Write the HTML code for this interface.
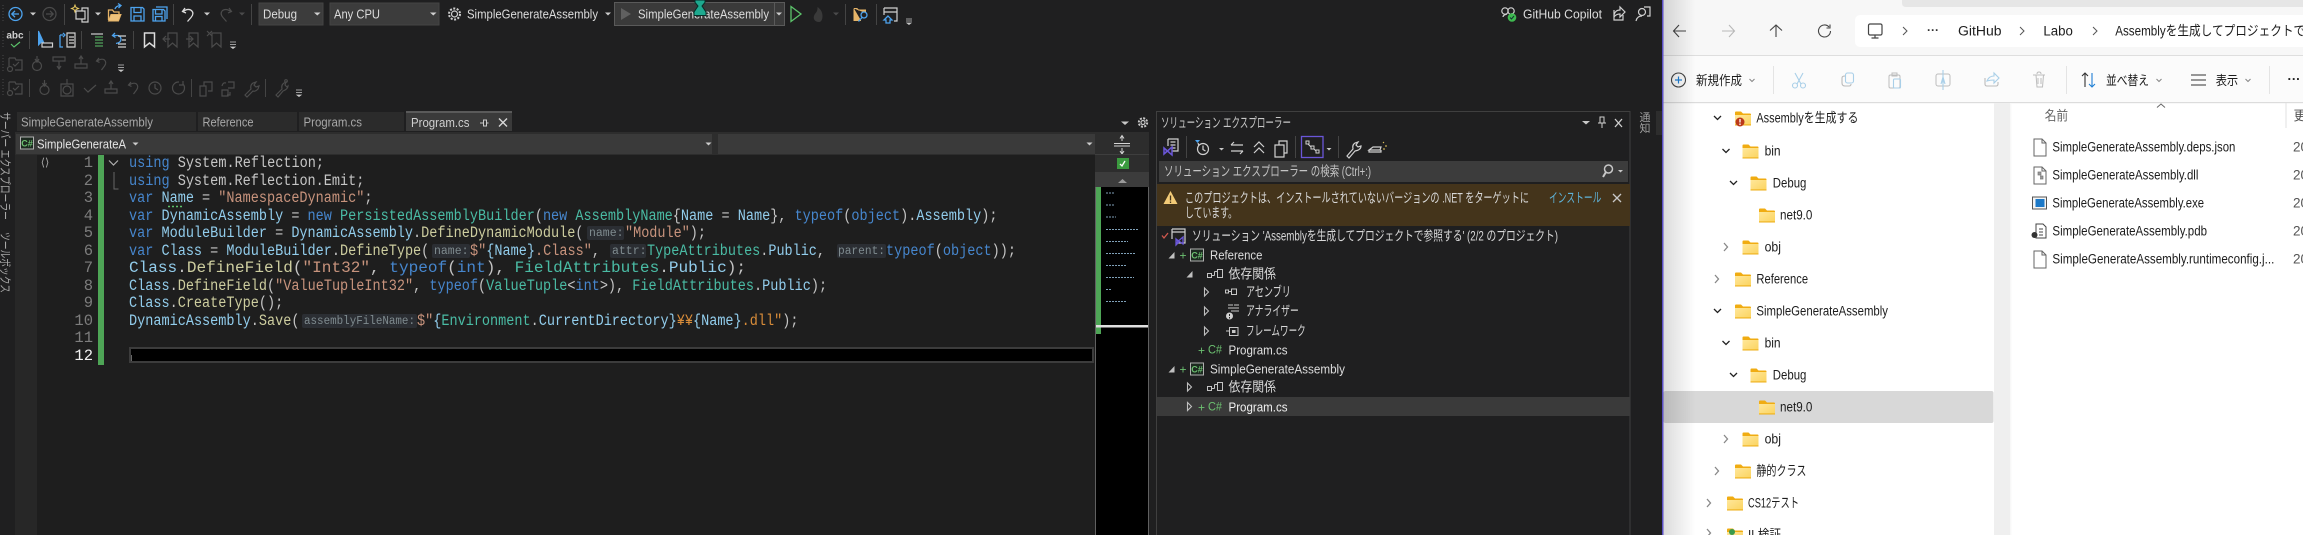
<!DOCTYPE html>
<html lang="ja"><head><meta charset="utf-8"><title>VS</title>
<style>
html,body{margin:0;padding:0;background:#1f1f20;width:2303px;height:535px;overflow:hidden}
svg{position:absolute;left:0;top:0;display:block}
text{white-space:pre;dominant-baseline:central;font-family:"Liberation Sans","Noto Sans CJK JP",sans-serif}
.u{font-size:13px;fill:#dcdcdc}
.d{font-size:13px;fill:#a8a8a8}
.j{font-size:13.5px;fill:#d8d8d8}
.x{font-size:13.5px;fill:#1c1c1c}
.c{font-family:"Liberation Mono","Noto Sans CJK JP",monospace;font-size:15.5px;fill:#d4d4d4;opacity:.92}
.n{font-family:"Liberation Mono",monospace;font-size:15.5px;fill:#7d7d7d;text-anchor:end}
.h{font-family:"Liberation Mono",monospace;font-size:11.5px;fill:#7f8b8f}
.k{fill:#4a8fdc}.t{fill:#4ec9b0}.v{fill:#9cdcfe}.m{fill:#dcdcaa}.s{fill:#d69d85}.y{fill:#e8963c}
.ic{fill:none;stroke:#d0d0d0;stroke-width:1.2}
.dm{fill:none;stroke:#4b4b4b;stroke-width:1.2}
.bl{fill:none;stroke:#4da3ee;stroke-width:1.3}
.sp{stroke:#444;stroke-width:1}
.ex{fill:none;stroke:#555;stroke-width:1.1}
.fa{fill:none;stroke:#a9cfe8;stroke-width:1.1}
</style></head><body>
<svg width="2303" height="535" viewBox="0 0 2303 535" xmlns="http://www.w3.org/2000/svg">
<defs>
<linearGradient id="fg" x1="0" y1="0" x2="1" y2="1"><stop offset="0" stop-color="#ffe79a"/><stop offset="1" stop-color="#fbd35e"/></linearGradient>
<linearGradient id="sh" x1="0" y1="0" x2="1" y2="0"><stop offset="0" stop-color="#000" stop-opacity=".14"/><stop offset="1" stop-color="#000" stop-opacity="0"/></linearGradient>
<symbol id="f" viewBox="0 0 16 15" overflow="visible"><path d="M0 1.5Q0 .5 1 .5H6L8 2.5H15Q16 2.5 16 3.5V5H0Z" fill="#f0ac12"/><path d="M0 4H16V13Q16 14.5 15 14.5H1Q0 14.5 0 13Z" fill="url(#fg)"/><path d="M0 13.4H16V14.5H0Z" fill="#eeaf18"/></symbol>
<symbol id="cs" viewBox="0 0 14 14" overflow="visible"><rect x=".5" y=".5" width="13" height="12" fill="#1d2a20" stroke="#b0b0b0"/><text x="7" y="6.8" text-anchor="middle" style="font-size:9px;fill:#6cc070;font-weight:bold">C#</text></symbol>
<symbol id="dep" viewBox="0 0 16 10" overflow="visible"><path d="M.5 4.5h4v4h-4zM4.5 6.5h3M7.5 2.5h3M7.5 2.5v4M10.5 .5h5v8h-5z" fill="none" stroke="#c4c4c4"/></symbol>
</defs>

<!-- VS background -->
<rect width="1663" height="535" fill="#1f1f20"/>
<!-- drag dots -->
<path d="M3 5v18M3 31v18M3 55v18M3 79v18" stroke="#4a4a4a" stroke-dasharray="1 2"/>

<!-- Row 1 toolbar -->
<circle cx="15.5" cy="14" r="6.5" class="bl"/><path d="M19 14h-7M15 10.8L11.8 14 15 17.2" class="bl"/>
<path d="M30 12.5h6l-3 3z" fill="#ccc"/>
<circle cx="49.5" cy="14" r="6.5" class="dm"/><path d="M46 14h7M50 10.8L53.2 14 50 17.2" class="dm"/>
<path d="M64.500 4v21" class="sp"/>
<path d="M75 5l1 2.500 2.500 1-2.500 1-1 2.500-1-2.500-2.500-1 2.500-1z" fill="none" stroke="#e8c860"/>
<path d="M76 11h6V8h6v14h-6v-3h-6zM82 11h3v8h-3" class="ic"/>
<path d="M95 12.500h6l-3 3z" fill="#ccc"/>
<path d="M108.500 20V10h4l1.500 2h5v3" fill="none" stroke="#e6b468" stroke-width="1.300"/><path d="M108.500 21l2.500-6.500h10l-2.500 6.500z" fill="#eec27c" stroke="#e6b468"/><path d="M115 9q1-3 5-3.500M118 3.500l3 2-2.500 2.500" class="bl"/>
<path d="M131 7.500h11.500l1.500 1.500v12h-13zM134 7.500v5h7v-5M134 21v-5h7v5" class="bl"/>
<path d="M153 9.500h10.500l1.500 1.500v10h-12zM155.500 9.500v4.500h6.500v-4.500M155.500 21v-4.500h6.500V21M156 7h11v12" class="bl"/>
<path d="M173.500 4v21" class="sp"/>
<path d="M185 8l-2.500 3.500 3.500 1.500M183 11.500q5-3.500 8.500-1 3 3-.5 7l-3.500 4" fill="none" stroke="#dcdcdc" stroke-width="1.300"/>
<path d="M204 12.500h6l-3 3z" fill="#ccc"/>
<path d="M229 8l2.500 3.500-3.500 1.500M231 11.500q-5-3.500-8.500-1-3 3 .5 7l3.500 4" class="dm"/>
<path d="M239 12.500h6l-3 3z" fill="#4b4b4b"/>
<path d="M251.500 4v21" class="sp"/>

<rect x="259" y="3" width="64" height="22" fill="#3c3c3c" stroke="#444"/>
<text x="263" y="14" class="u" textLength="34" lengthAdjust="spacingAndGlyphs">Debug</text>
<path d="M314 12.500h6.500l-3.200 3z" fill="#d0d0d0"/>
<rect x="330" y="3" width="109" height="22" fill="#3c3c3c" stroke="#444"/>
<text x="334" y="14" class="u" textLength="46" lengthAdjust="spacingAndGlyphs">Any CPU</text>
<path d="M430 12.500h6.500l-3.200 3z" fill="#d0d0d0"/>
<circle cx="454.500" cy="14" r="3" class="ic"/><circle cx="454.500" cy="14" r="5.500" fill="none" stroke="#cfcfcf" stroke-width="2" stroke-dasharray="2 1.500"/>
<text x="467" y="14" class="u" textLength="131" lengthAdjust="spacingAndGlyphs">SimpleGenerateAssembly</text>
<path d="M605 12.500h6l-3 3z" fill="#ccc"/>
<rect x="614.500" y="2.500" width="170" height="23" fill="#3a3a3a" stroke="#5a5a5a"/>
<path d="M621 8l10 6-10 6z" fill="#606060"/>
<path d="M774.500 2.500v23" stroke="#5a5a5a"/>
<text x="638" y="14" class="u" textLength="131" lengthAdjust="spacingAndGlyphs">SimpleGenerateAssembly</text>
<path d="M776 12.500h6l-3 3z" fill="#ccc"/>
<path d="M695 0h10v2.500l-3 3.500 4 6v3.500h-12V12l4-6-3-3.500z" fill="#1ea98f" stroke="#062e28"/>
<path d="M791 6.500l10 7.500-10 7.500z" fill="none" stroke="#5cc26a" stroke-width="1.300"/>
<path d="M819 22c-4 0-6-3-5-6 .5-2 2-3 3-5 .5-1.500 .5-3 .5-4 3 2 5 5 5 9 0 3-1 6-3.500 6z" fill="#3a3a3a"/>
<path d="M833 12.500h6l-3 3z" fill="#4b4b4b"/>
<path d="M845.500 4v21" class="sp"/>
<path d="M854 8.500h3l1.500 1.500h7v3M854 8.500v12h7" fill="#e6b468" stroke="#e6b468"/><circle cx="864" cy="15" r="3" fill="#1f1f20" stroke="#4da3ee" stroke-width="1.300"/><path d="M862 17.500l-3.500 4" class="bl"/>
<path d="M876.500 4v21" class="sp"/>
<path d="M884 8h13v13h-3M884 8v7M884 12h13M884 8h13" class="ic"/><path d="M888 16l-4 4h2v3h4v-3h2z" class="bl"/>
<path d="M906 19h6M906 21h6M907 23h4l-2 1.500z" stroke="#c8c8c8" fill="#c8c8c8" stroke-width=".8"/>

<circle cx="1505" cy="11" r="3.200" class="ic"/><circle cx="1511" cy="11" r="3.200" class="ic"/><path d="M1503 17q0-2 4-3M1512 13v2" class="ic"/><circle cx="1512" cy="17.500" r="4.300" fill="#3fb950"/><path d="M1510 17.500l1.500 1.500 2.500-3" stroke="#133" fill="none"/>
<text x="1523" y="14" class="u" textLength="79" lengthAdjust="spacingAndGlyphs">GitHub Copilot</text>
<path d="M1614 10v10h9v-5M1614 15q1-5 6-5V7l5 5-5 5v-3q-4 0-6 3" class="ic"/>
<circle cx="1642" cy="12" r="3.500" class="ic"/><path d="M1636 21q1-5 6-5M1644 7h6v9h-3" class="ic"/>

<!-- Row 2 -->
<text x="15" y="36" text-anchor="middle" style="font-size:10px;fill:#d0d0d0;font-weight:bold">abc</text>
<path d="M11 44l3 3 6-5" fill="none" stroke="#5cc26a" stroke-width="1.200"/>
<path d="M29.500 31v18" class="sp"/>
<path d="M38.500 31v14l3-3 2 0z" fill="#4da3ee" stroke="#4da3ee"/><rect x="42" y="43" width="10.500" height="4" fill="none" stroke="#d0d0d0" stroke-width="1.200"/>
<path d="M60 35h3M60 35v12h3M63 33l2 2-2 2" class="bl"/><path d="M67 33h8v14h-8zM69 37h5M69 40h5M69 43h5" class="ic"/>
<path d="M81.500 31v18" class="sp"/>
<path d="M91 34h12M95 37h8M95 40h8M95 43h8M95 46h8" fill="none" stroke="#5cc26a" stroke-width="1.100"/><path d="M91 34h12" class="ic"/>
<path d="M115 33l-2.500 2.500 3 2M113 35.500h5q3 1 3 4t-5 4" class="bl"/><path d="M118 36h8M122 40h4M118 44h8M118 47h8" class="ic"/>
<path d="M133.500 31v18" class="sp"/>
<path d="M144.500 33h10v14l-5-4-5 4z" fill="none" stroke="#dcdcdc" stroke-width="1.500"/>
<path d="M168 33h9v14l-4.500-4-4.500 4zM170 39h-7M166 36l-3 3 3 3" class="dm"/>
<path d="M189 33h9v14l-4.500-4-4.500 4zM186 39h7M190 36l3 3-3 3" class="dm"/>
<path d="M212 33h9v14l-4.500-4-4.500 4zM207 31l5 5M212 31l-5 5" class="dm"/>
<path d="M230 42h6M230 44.500h6M231 47h4l-2 1.500z" stroke="#c8c8c8" fill="#c8c8c8" stroke-width=".8"/>

<!-- Row 3 -->
<path d="M9 58h6l1 2h6v10h-7M9 58v8M13 64l2 2 4-4" class="dm"/><circle cx="10" cy="69" r="2.500" class="dm"/>
<circle cx="37" cy="66" r="4.500" class="dm"/><path d="M37 56v6M35 59l2 3 2-3" class="dm"/>
<path d="M53 57h12v4H53zM59 61v8M57 66l2 3 2-3" class="dm"/>
<path d="M75 64h12v4H75zM81 64v-8M79 59l2-3 2 3" class="dm"/>
<path d="M99 58l-2.500 3 3 1.500M97 61q5-3 7.500-1 2.500 2.500 0 6l-3 4" class="dm"/>
<path d="M118 65h6M118 67.500h6M119 70h4l-2 1.500z" stroke="#c8c8c8" fill="#c8c8c8" stroke-width=".8"/>

<!-- Row 4 -->
<path d="M9 82h6l1 2h6v10h-7M9 82v8M13 88l2 2 4-4" class="dm"/><circle cx="10" cy="93" r="2.500" class="dm"/>
<path d="M29.500 79v18" class="sp"/>
<circle cx="44.500" cy="90" r="4.500" class="dm"/><path d="M44.500 80v6M42.500 83l2 3 2-3" class="dm"/>
<path d="M61 84h12v12H61z" class="dm"/><circle cx="67" cy="90" r="4" class="dm"/><path d="M67 79v5" class="dm"/>
<path d="M84 88l4 4 8-7" class="dm"/>
<path d="M105 89h12v4h-12zM111 89v-8M109 84l2-3 2 3" class="dm"/>
<path d="M131 82l-2.500 3 3 1.500M129 85q5-3 7.500-1 2.500 2.500 0 6l-3 4" class="dm"/>
<circle cx="155" cy="88" r="6" class="dm"/><path d="M155 84v4l3 2" class="dm"/>
<path d="M183 84a6 6 0 1 1-4-2M183 81v4h-4" class="dm"/>
<path d="M191.500 79v18" class="sp"/>
<path d="M200 86h6v10h-6zM204 86v-4h8v9h-4" class="dm"/>
<path d="M222 90h6v6h-6zM228 82h6v6h-6M222 86q1-4 4-3M230 92v3h-3" class="dm"/>
<path d="M245 95l6-6q-1-4 2-6l3-1-2 3 2 2 3-1-1 3q-3 3-5 2l-6 6z" class="dm"/>
<path d="M265.500 79v18" class="sp"/>
<path d="M276 95l6-6q-1-4 2-6l2-1-1 3 2 2 1-1q0 3-5 5l-5 6z" class="dm"/><circle cx="286" cy="81" r="1.300" class="dm"/>
<path d="M296 90h6M296 92.500h6M297 95h4l-2 1.500z" stroke="#c8c8c8" fill="#c8c8c8" stroke-width=".8"/>

<!-- left rotated strip -->
<text transform="translate(5,112) rotate(90)" class="d" style="font-size:12px" textLength="108" lengthAdjust="spacingAndGlyphs">サーバー エクスプローラー</text>
<text transform="translate(5,232) rotate(90)" class="d" style="font-size:12px" textLength="61" lengthAdjust="spacingAndGlyphs">ツールボックス</text>

<!-- Document tabs -->
<rect x="17" y="112" width="179" height="19" fill="#2b2b2b"/>
<rect x="198" y="112" width="99" height="19" fill="#2b2b2b"/>
<rect x="299" y="112" width="105" height="19" fill="#2b2b2b"/>
<rect x="406" y="112" width="106" height="19" fill="#3a3a3a"/><rect x="406" y="111" width="106" height="2" fill="#5a5a5a"/>
<text x="21" y="122" class="d" textLength="132" lengthAdjust="spacingAndGlyphs">SimpleGenerateAssembly</text>
<text x="202.500" y="122" class="d" textLength="51" lengthAdjust="spacingAndGlyphs">Reference</text>
<text x="303.500" y="122" class="d" textLength="58.500" lengthAdjust="spacingAndGlyphs">Program.cs</text>
<text x="411" y="122.500" class="u" style="fill:#d0d0d0" textLength="58.500" lengthAdjust="spacingAndGlyphs">Program.cs</text>
<path d="M480 123h3M483.500 120v6h3v-6zM486.500 123h2" stroke="#ccc" fill="none"/>
<path d="M499 118.500l8 8M507 118.500l-8 8" stroke="#d8d8d8" stroke-width="1.400"/>
<path d="M1121 121.500h8l-4 3.500z" fill="#c8c8c8"/>
<circle cx="1143" cy="122.500" r="2" fill="none" stroke="#c8c8c8" stroke-width="1.200"/><circle cx="1143" cy="122.500" r="4.200" fill="none" stroke="#c8c8c8" stroke-width="2" stroke-dasharray="2 1.300"/>

<!-- Editor -->
<rect x="15" y="132" width="1134" height="403" fill="#1e1e1e"/>
<rect x="15" y="132" width="1134" height="23" fill="#2d2d2d"/>
<rect x="16" y="134" width="696" height="20" fill="#3a3a3a"/>
<rect x="718" y="134" width="377" height="20" fill="#3a3a3a"/>
<use href="#cs" x="20" y="136.500" width="14" height="14"/>
<text x="37" y="144" class="u" style="fill:#e4e4e4" textLength="89" lengthAdjust="spacingAndGlyphs">SimpleGenerateA</text>
<path d="M132.500 142.500h6l-3 3z" fill="#ccc"/>
<path d="M705.500 142.500h6l-3 3z" fill="#ccc"/>
<path d="M1086.500 142.500h6l-3 3z" fill="#ccc"/>
<rect x="15" y="155" width="22" height="380" fill="#272727"/>
<text x="45" y="163" class="d" text-anchor="middle" style="font-size:11px">⟨⟩</text>
<rect x="98" y="155" width="6" height="210" fill="#4ea556"/>
<path d="M109 160.500l4.500 4.500 4.500-4.500" fill="none" stroke="#b0b0b0" stroke-width="1.200"/>
<path d="M114 172v17h4.500" fill="none" stroke="#666"/>

<text class="n" x="93" y="163">1</text>
<text class="n" x="93" y="181">2</text>
<text class="n" x="93" y="198">3</text>
<text class="n" x="93" y="216">4</text>
<text class="n" x="93" y="233">5</text>
<text class="n" x="93" y="251">6</text>
<text class="n" x="93" y="268">7</text>
<text class="n" x="93" y="286">8</text>
<text class="n" x="93" y="303">9</text>
<text class="n" x="93" y="321">10</text>
<text class="n" x="93" y="338">11</text>
<text class="n" x="93" y="356" style="fill:#f0f0f0">12</text>

<text class="c" x="129" y="163" textLength="195" lengthAdjust="spacingAndGlyphs"><tspan class="k">using</tspan> System.Reflection;</text>
<text class="c" x="129" y="181" textLength="235.400" lengthAdjust="spacingAndGlyphs"><tspan class="k">using</tspan> System.Reflection.Emit;</text>
<text class="c" x="129" y="198" textLength="243.500" lengthAdjust="spacingAndGlyphs"><tspan class="k">var</tspan> <tspan class="v">Name</tspan> = <tspan class="s">"NamespaceDynamic"</tspan>;</text>
<path d="M168 206.500h16" stroke="#5cc26a" stroke-width="1.500" stroke-dasharray="2 2"/>
<text class="c" x="129" y="216" textLength="868.500" lengthAdjust="spacingAndGlyphs"><tspan class="k">var</tspan> <tspan class="v">DynamicAssembly</tspan> = <tspan class="k">new</tspan> <tspan class="t">PersistedAssemblyBuilder</tspan>(<tspan class="k">new</tspan> <tspan class="t">AssemblyName</tspan>{<tspan class="v">Name</tspan> = <tspan class="v">Name</tspan>}, <tspan class="k">typeof</tspan>(<tspan class="k">object</tspan>).<tspan class="v">Assembly</tspan>);</text>
<text class="c" x="129" y="233" textLength="454.500" lengthAdjust="spacingAndGlyphs"><tspan class="k">var</tspan> <tspan class="v">ModuleBuilder</tspan> = <tspan class="v">DynamicAssembly</tspan>.<tspan class="m">DefineDynamicModule</tspan>(</text>
<rect x="587" y="226" width="37" height="14" rx="2" fill="#2b2e33"/>
<text class="h" x="589" y="233.500">name:</text>
<text class="c" x="625" y="233" textLength="81" lengthAdjust="spacingAndGlyphs"><tspan class="s">"Module"</tspan>);</text>
<text class="c" x="129" y="251" textLength="300.300" lengthAdjust="spacingAndGlyphs"><tspan class="k">var</tspan> <tspan class="v">Class</tspan> = <tspan class="v">ModuleBuilder</tspan>.<tspan class="m">DefineType</tspan>(</text>
<rect x="432" y="244" width="38" height="14" rx="2" fill="#2b2e33"/>
<text class="h" x="434" y="251.500">name:</text>
<text class="c" x="470" y="251" textLength="130" lengthAdjust="spacingAndGlyphs"><tspan class="s">$"</tspan><tspan class="v">{Name}</tspan><tspan class="s">.Class"</tspan>,</text>
<rect x="610" y="244" width="36" height="14" rx="2" fill="#2b2e33"/>
<text class="h" x="612" y="251.500">attr:</text>
<text class="c" x="647" y="251" textLength="178" lengthAdjust="spacingAndGlyphs"><tspan class="t">TypeAttributes</tspan>.<tspan class="v">Public</tspan>,</text>
<rect x="837" y="244" width="49" height="14" rx="2" fill="#2b2e33"/>
<text class="h" x="838" y="251.500" textLength="47" lengthAdjust="spacingAndGlyphs">parent:</text>
<text class="c" x="886" y="251" textLength="130" lengthAdjust="spacingAndGlyphs"><tspan class="k">typeof</tspan>(<tspan class="k">object</tspan>));</text>
<text class="c" x="129" y="268" textLength="617" lengthAdjust="spacingAndGlyphs"><tspan class="v">Class</tspan>.<tspan class="m">DefineField</tspan>(<tspan class="s">"Int32"</tspan>, <tspan class="k">typeof</tspan>(<tspan class="k">int</tspan>), <tspan class="t">FieldAttributes</tspan>.<tspan class="v">Public</tspan>);</text>
<text class="c" x="129" y="286" textLength="698.100" lengthAdjust="spacingAndGlyphs"><tspan class="v">Class</tspan>.<tspan class="m">DefineField</tspan>(<tspan class="s">"ValueTupleInt32"</tspan>, <tspan class="k">typeof</tspan>(<tspan class="t">ValueTuple</tspan>&lt;<tspan class="k">int</tspan>&gt;), <tspan class="t">FieldAttributes</tspan>.<tspan class="v">Public</tspan>);</text>
<text class="c" x="129" y="303" textLength="154.200" lengthAdjust="spacingAndGlyphs"><tspan class="v">Class</tspan>.<tspan class="m">CreateType</tspan>();</text>
<text class="c" x="129" y="321" textLength="170.500" lengthAdjust="spacingAndGlyphs"><tspan class="v">DynamicAssembly</tspan>.<tspan class="m">Save</tspan>(</text>
<rect x="302" y="314" width="115" height="14" rx="2" fill="#2b2e33"/>
<text class="h" x="304" y="321.500" textLength="111" lengthAdjust="spacingAndGlyphs">assemblyFileName:</text>
<text class="c" x="417" y="321" textLength="381.500" lengthAdjust="spacingAndGlyphs"><tspan class="s">$"</tspan><tspan class="v">{</tspan><tspan class="t">Environment</tspan>.<tspan class="v">CurrentDirectory}</tspan><tspan class="y">¥¥</tspan><tspan class="v">{Name}</tspan><tspan class="y">.dll"</tspan>);</text>
<rect x="130" y="348" width="963" height="14" fill="#000" stroke="#3c3c3c" stroke-width="2"/>
<rect x="131" y="355" width="1" height="6" fill="#666"/>

<!-- right scroll/minimap -->
<rect x="1095" y="132" width="54" height="403" fill="#2d2d2d"/>
<path d="M1114 143.500h16M1114 146h16M1122 136v5M1120 138.500l2-3 2 3M1122 148v5M1120 151l2 3 2-3" stroke="#d4d4d4" fill="none"/>
<path d="M1095 154.500h54" stroke="#3e3e3e"/>
<rect x="1117" y="158" width="12" height="11" fill="#3b9a3f"/><path d="M1120 164l2 2 3-5" stroke="#fff" fill="none" stroke-width="1.300"/>
<rect x="1095" y="172" width="54" height="15" fill="#3c3c3c"/><path d="M1118 183l4.500-4 4.500 4z" fill="#9a9a9a"/>
<rect x="1095" y="187" width="54" height="348" fill="#000"/>
<rect x="1095" y="187" width="6" height="147" fill="#4ea556"/>
<rect x="1095" y="325" width="53" height="2.500" fill="#e0e0e0"/>
<path d="M1095.500 187V535M1148.500 187V535" stroke="#606060" fill="none"/>
<g stroke="#7fa0b8" stroke-width="1" stroke-dasharray="2 1"><path d="M1106 193h8M1106 205h8M1106 217h10M1106 229.500h33M1106 241.500h22M1106 253.500h30M1106 265.500h21M1106 277.500h28M1106 289.500h6M1106 301.500h21"/></g>

<!-- Solution Explorer -->
<rect x="1156.500" y="111.500" width="473.500" height="424" fill="#1f1f20" stroke="#3f3f3f"/>
<text x="1161" y="123" class="j" style="fill:#c8c8c8" textLength="130" lengthAdjust="spacingAndGlyphs">ソリューション エクスプローラー</text>
<path d="M1582 121h8l-4 3.500z" fill="#c8c8c8"/>
<path d="M1600 117h4v6h-4zM1598 123h8M1602 123v5" stroke="#d0d0d0" fill="none"/>
<path d="M1615 119l7 8M1622 119l-7 8" stroke="#d0d0d0" stroke-width="1.300"/>

<path d="M1168 139h10v12h-6M1168 139v7M1170.500 142h5M1170.500 145h5M1170.500 148h5" class="ic"/><path d="M1164 148l3 3-3 3zM1164 148l8 7v-8l-8 7" fill="none" stroke="#6a56d8" stroke-width="1.500"/>
<path d="M1186.500 136v22M1295.500 136v22M1338.500 136v22" class="sp"/>
<path d="M1195 140h5l-2.500 3z" fill="#4da3ee"/><circle cx="1203" cy="149" r="5.500" class="ic"/><path d="M1203 145.500v4l2.500 1.500M1198 143l1 3" class="ic"/>
<path d="M1219 148h5l-2.500 2.500z" fill="#c8c8c8"/>
<path d="M1231 145h12M1234 142l-3 3M1231 151h12M1240 154l3-3" class="ic"/>
<path d="M1254 147l5-5 5 5M1254 153l5-5 5 5" class="ic"/>
<path d="M1275 145h9v12h-9zM1279 145v-4h8v12h-3" class="ic"/>
<rect x="1301.500" y="136.500" width="21.500" height="21" fill="none" stroke="#6a56d8" stroke-width="1.300"/>
<path d="M1306 141h3v3h-3zM1311 146h3v3h-3zM1316 150h3v3h-3zM1308 144l3 3M1314 149l2 2" stroke="#d0d0d0" fill="none"/>
<path d="M1326.500 148h5l-2.500 2.500z" fill="#c8c8c8"/>
<path d="M1347 156l6-7q-1-4 2-6l3-1-2 3 2 2 3-1q0 4-6 5l-6 7z" class="ic"/>
<path d="M1369 150h11l1-3h-8zM1369 150v2h12v-2" class="ic"/><path d="M1383 143l1-1M1385 146h2M1383 149h2" stroke="#e8c860"/>

<rect x="1159" y="161" width="469" height="21" fill="#3c3c3c"/>
<text x="1164" y="171.500" class="j" style="fill:#c4c4c4" textLength="207" lengthAdjust="spacingAndGlyphs">ソリューション エクスプローラー の検索 (Ctrl+:)</text>
<circle cx="1608.500" cy="169" r="4" fill="none" stroke="#c8c8c8" stroke-width="1.500"/><path d="M1606 172l-3 5" stroke="#c8c8c8" stroke-width="2"/>
<path d="M1618 170h5l-2.500 2.500z" fill="#c8c8c8"/>

<rect x="1157" y="184" width="473" height="42" fill="#44341b"/>
<path d="M1170.500 191l7 13h-14z" fill="#f3cb77"/><path d="M1170.500 195.500v5M1170.500 201.500v1.500" stroke="#44341b" stroke-width="1.300"/>
<text x="1185" y="198" class="j" textLength="344" lengthAdjust="spacingAndGlyphs">このプロジェクトは、インストールされていないバージョンの .NET をターゲットに</text>
<text x="1185" y="213" class="j" textLength="52" lengthAdjust="spacingAndGlyphs">しています。</text>
<text x="1549" y="198" class="j" style="fill:#5fb3d9" textLength="52.400" lengthAdjust="spacingAndGlyphs">インストール</text>
<path d="M1613 194l8 8M1621 194l-8 8" stroke="#c8c8c8" stroke-width="1.300"/>

<path d="M1162 235.500l2 2.500 4-5" stroke="#d0584e" fill="none" stroke-width="1.300"/>
<path d="M1172 229h13v14h-9M1172 229v10M1172 232h13" class="ic"/><path d="M1176 239l3 3-3 3zM1176 239l7 5v-7l-7 6" fill="none" stroke="#6a56d8" stroke-width="1.300"/>
<text x="1192" y="236" class="j" textLength="366" lengthAdjust="spacingAndGlyphs">ソリューション 'Assemblyを生成してプロジェクトで参照する' (2/2 のプロジェクト)</text>

<path d="M1174.500 252v6.500h-6z" fill="#c0c0c0"/>
<text x="1183" y="255.500" text-anchor="middle" style="font-size:12px;fill:#6cc070">+</text>
<use href="#cs" x="1190" y="248.500" width="14" height="14"/>
<text x="1210" y="255" class="u" textLength="52.400" lengthAdjust="spacingAndGlyphs">Reference</text>

<path d="M1192.500 271v6.500h-6z" fill="#c0c0c0"/>
<use href="#dep" x="1207" y="269" width="16" height="10"/>
<text x="1228.500" y="274" class="j" textLength="47.500" lengthAdjust="spacingAndGlyphs">依存関係</text>

<path d="M1204.500 288l4 4-4 4z" fill="none" stroke="#c0c0c0" stroke-width="1.100"/>
<path d="M1225.500 290h3v3h-3zM1228.500 291.500h3M1231.500 289h5v5.500h-5z" stroke="#c8c8c8" fill="none"/>
<text x="1246" y="292" class="j" textLength="44.800" lengthAdjust="spacingAndGlyphs">アセンブリ</text>

<path d="M1204.500 307l4 4-4 4z" fill="none" stroke="#c0c0c0" stroke-width="1.100"/>
<path d="M1228 305h5M1234 305h5M1228 308h11M1231 311h8" stroke="#c8c8c8" fill="none"/><circle cx="1229.500" cy="316" r="3.500" fill="#d0d0d0"/><path d="M1229.500 314v2M1229.500 317v1.500" stroke="#222"/>
<text x="1246" y="311" class="j" textLength="52.800" lengthAdjust="spacingAndGlyphs">アナライザー</text>

<path d="M1204.500 327l4 4-4 4z" fill="none" stroke="#c0c0c0" stroke-width="1.100"/>
<path d="M1226 331h3M1229.500 327.500h8.500v8h-8.500z" stroke="#c8c8c8" fill="none"/><rect x="1232" y="330" width="3.500" height="3" fill="#c8c8c8"/>
<text x="1246" y="331" class="j" textLength="59.700" lengthAdjust="spacingAndGlyphs">フレームワーク</text>

<text x="1201.500" y="350.500" text-anchor="middle" style="font-size:12px;fill:#6cc070">+</text>
<text x="1208" y="349.500" style="font-size:12px;fill:#6cc070" textLength="14" lengthAdjust="spacingAndGlyphs">C#</text>
<text x="1228.500" y="350" class="u" style="fill:#e0e0e0" textLength="59" lengthAdjust="spacingAndGlyphs">Program.cs</text>

<path d="M1174.500 366v6.500h-6z" fill="#c0c0c0"/>
<text x="1183" y="369.500" text-anchor="middle" style="font-size:12px;fill:#6cc070">+</text>
<use href="#cs" x="1190" y="362.500" width="14" height="14"/>
<text x="1210" y="369" class="u" textLength="135" lengthAdjust="spacingAndGlyphs">SimpleGenerateAssembly</text>

<path d="M1187.500 383l4 4-4 4z" fill="none" stroke="#c0c0c0" stroke-width="1.100"/>
<use href="#dep" x="1207" y="382" width="16" height="10"/>
<text x="1228.500" y="387" class="j" textLength="47.500" lengthAdjust="spacingAndGlyphs">依存関係</text>

<rect x="1157" y="397" width="473" height="19" fill="#3a3a3a"/>
<path d="M1187.500 402.500l4 4-4 4z" fill="none" stroke="#c0c0c0" stroke-width="1.100"/>
<text x="1201.500" y="407.500" text-anchor="middle" style="font-size:12px;fill:#6cc070">+</text>
<text x="1208" y="406.500" style="font-size:12px;fill:#6cc070" textLength="14" lengthAdjust="spacingAndGlyphs">C#</text>
<text x="1228.500" y="407" class="u" style="fill:#f0f0f0" textLength="59" lengthAdjust="spacingAndGlyphs">Program.cs</text>

<!-- notify strip -->
<text x="1645" y="118" text-anchor="middle" style="font-size:11px;fill:#a0a0a0">通</text>
<text x="1645" y="129" text-anchor="middle" style="font-size:11px;fill:#a0a0a0">知</text>
<rect x="1656" y="111" width="6" height="24" fill="#2d2d2d"/>
<rect x="1662" y="0" width="1.500" height="535" fill="#5b4fc4"/>

<!-- File Explorer -->
<rect x="1663.500" y="0" width="640" height="535" fill="#fff"/>
<rect x="1663.500" y="0" width="640" height="55" fill="#f7f7f7"/>
<path d="M1902 0h401v7h-397q-4 0-4-4z" fill="#e6e6e6"/>
<rect x="1663.500" y="55" width="640" height="1" fill="#dedede"/>
<rect x="1855" y="15" width="460" height="32" rx="5" fill="#fff"/>
<rect x="1663.500" y="56" width="640" height="46" fill="#fbfbfb"/>
<rect x="1663.500" y="102" width="640" height="1.200" fill="#dcdcdc"/>

<path d="M1686 31h-12M1679 25l-5.500 6 5.500 6" fill="none" stroke="#444" stroke-width="1.100"/>
<path d="M1722 31h12M1729 25l5.500 6-5.500 6" fill="none" stroke="#b8b8b8" stroke-width="1.100"/>
<path d="M1776 37V25M1770 30.500l6-5.500 6 5.500" fill="none" stroke="#444" stroke-width="1.100"/>
<path d="M1829 27a6 6 0 1 0 1.500 4M1830 24.500v3.500h-3.500" fill="none" stroke="#444" stroke-width="1.100"/>
<rect x="1868.500" y="24" width="13.500" height="11" rx="1.500" fill="none" stroke="#444" stroke-width="1.200"/><path d="M1875 35v2.500M1871.500 38h7" stroke="#444" stroke-width="1.200"/>
<path d="M1903 27l4 4-4 4M2020 27l4 4-4 4M2093 27l4 4-4 4" fill="none" stroke="#555"/>
<text x="1933" y="30" text-anchor="middle" style="font-size:12px;fill:#333;font-weight:bold">···</text>
<text x="1958" y="31" class="x" textLength="43.500" lengthAdjust="spacingAndGlyphs">GitHub</text>
<text x="2043.400" y="31" class="x" textLength="29.500" lengthAdjust="spacingAndGlyphs">Labo</text>
<text x="2115.200" y="31" class="x" textLength="190" lengthAdjust="spacingAndGlyphs">Assemblyを生成してプロジェクトで</text>

<circle cx="1678.500" cy="80" r="7" fill="none" stroke="#444" stroke-width="1.100"/><path d="M1678.500 76.500v7M1675 80h7" stroke="#1f7fd4" stroke-width="1.200"/>
<text x="1696" y="80.500" class="x" style="font-size:13px" textLength="46" lengthAdjust="spacingAndGlyphs">新規作成</text>
<path d="M1749.500 79l2.500 2.500 2.500-2.500" class="ex" style="stroke:#888"/>
<path d="M1773.500 66v28M2066.500 66v28M2269.500 66v28" stroke="#e4e4e4"/>
<path d="M1795 73l6 11M1803 73l-6 11" class="fa"/><circle cx="1795" cy="85.500" r="2.500" class="fa"/><circle cx="1803" cy="85.500" r="2.500" class="fa"/>
<rect x="1845.500" y="73" width="8" height="10" rx="2" fill="none" stroke="#a9cfe8" stroke-width="1.100"/><path d="M1845 76q-3 0-3 2v5q0 3 3 3h4q2 0 2-2" class="ex" style="stroke:#bbb"/>
<rect x="1889" y="75" width="11" height="13" rx="1.500" fill="none" stroke="#bdbdbd"/><rect x="1892" y="73" width="5" height="3" fill="none" stroke="#bdbdbd"/><rect x="1893.500" y="79" width="7" height="9" rx="1" fill="none" stroke="#a9cfe8" stroke-width="1.100"/>
<rect x="1936" y="74" width="14" height="12" rx="2" fill="none" stroke="#bdbdbd"/><path d="M1941 84l2-7 2 7M1942 82h2M1943 70v20" class="fa"/>
<path d="M1985 78v6q0 2 2 2h9q2 0 2-2v-2" class="ex" style="stroke:#bbb"/><path d="M1987 81q2-5 7-5v-3l5 5-5 5v-3q-4 0-7 1z" class="fa"/>
<path d="M2033 75h12M2036 75l1 12h4.500l1 0 1-12M2037 74q0-2 2-2t2 2M2038 78v6M2041 78v6" fill="none" stroke="#bdbdbd"/>
<path d="M2085 87V73M2082 76l3-3 3 3" fill="none" stroke="#333" stroke-width="1.100"/><path d="M2092 73v14M2089 84l3 3 3-3" fill="none" stroke="#1f7fd4" stroke-width="1.100"/>
<text x="2106" y="80.500" class="x" style="font-size:13px" textLength="43" lengthAdjust="spacingAndGlyphs">並べ替え</text>
<path d="M2156.500 79l2.500 2.500 2.500-2.500" class="ex" style="stroke:#888"/>
<path d="M2191 75h15M2191 80h15M2191 85h15" stroke="#333" stroke-width="1.100"/>
<text x="2215.700" y="80.500" class="x" style="font-size:13px" textLength="22.500" lengthAdjust="spacingAndGlyphs">表示</text>
<path d="M2245.500 79l2.500 2.500 2.500-2.500" class="ex" style="stroke:#888"/>
<text x="2294" y="79" text-anchor="middle" style="font-size:13px;fill:#222;font-weight:bold">···</text>

<!-- explorer panes -->
<rect x="1994" y="103" width="16" height="432" fill="#efefef"/>
<rect x="2010" y="103" width="1.500" height="432" fill="#f8f8f8"/>
<rect x="1663.500" y="391" width="330" height="32" rx="2" fill="#d8d8d8"/>
<path d="M2157 107.500l4-3.500 4 3.500" fill="none" stroke="#666"/>
<rect x="2285.500" y="103" width="1" height="25" fill="#e2e2e2"/>
<text x="2044.700" y="116" class="x" style="fill:#666" textLength="23.400" lengthAdjust="spacingAndGlyphs">名前</text>
<text x="2293.500" y="116" class="x" style="fill:#555">更</text>

<g fill="none" stroke="#222" stroke-width="1.300">
<path d="M1714 116l3.500 3.500 3.500-3.500M1722.500 149l3.500 3.500 3.500-3.500M1730 181l3.500 3.500 3.500-3.500M1714 309l3.500 3.500 3.500-3.500M1722.500 341l3.500 3.500 3.500-3.500M1730 373l3.500 3.500 3.500-3.500"/>
</g>
<g fill="none" stroke="#888" stroke-width="1.300">
<path d="M1724 243l3.500 4-3.500 4M1715 275l3.500 4-3.500 4M1724 435l3.500 4-3.500 4M1715 467l3.500 4-3.500 4M1707 499l3.500 4-3.500 4M1707 529l3.500 4-3.500 4"/>
</g>
<use href="#f" x="1735" y="111" width="16" height="15"/>
<circle cx="1740" cy="122" r="4.500" fill="#bb3a1a"/><path d="M1740 119v3.500M1740 123.500v1.500" stroke="#fff" stroke-width="1.300"/>
<use href="#f" x="1742.500" y="144" width="16" height="15"/>
<use href="#f" x="1750.500" y="176" width="16" height="15"/>
<use href="#f" x="1759" y="208" width="16" height="15"/>
<use href="#f" x="1742.500" y="240" width="16" height="15"/>
<use href="#f" x="1735" y="272" width="16" height="15"/>
<use href="#f" x="1735" y="304" width="16" height="15"/>
<use href="#f" x="1742.500" y="336" width="16" height="15"/>
<use href="#f" x="1750.500" y="368" width="16" height="15"/>
<use href="#f" x="1759" y="400" width="16" height="15"/>
<use href="#f" x="1742.500" y="432" width="16" height="15"/>
<use href="#f" x="1735" y="464" width="16" height="15"/>
<use href="#f" x="1727" y="496" width="16" height="15"/>
<use href="#f" x="1727" y="528" width="16" height="15"/>
<circle cx="1732" cy="532" r="3" fill="#3a9a4a"/>

<text x="1756.400" y="118" class="x" textLength="102" lengthAdjust="spacingAndGlyphs">Assemblyを生成する</text>
<text x="1764.600" y="151" class="x" textLength="16" lengthAdjust="spacingAndGlyphs">bin</text>
<text x="1772.800" y="183" class="x" textLength="33.600" lengthAdjust="spacingAndGlyphs">Debug</text>
<text x="1780" y="215" class="x" textLength="32.400" lengthAdjust="spacingAndGlyphs">net9.0</text>
<text x="1764.600" y="247" class="x" textLength="16.400" lengthAdjust="spacingAndGlyphs">obj</text>
<text x="1756.400" y="279" class="x" textLength="51.700" lengthAdjust="spacingAndGlyphs">Reference</text>
<text x="1756.400" y="311" class="x" textLength="131.600" lengthAdjust="spacingAndGlyphs">SimpleGenerateAssembly</text>
<text x="1764.600" y="343" class="x" textLength="16" lengthAdjust="spacingAndGlyphs">bin</text>
<text x="1772.800" y="375" class="x" textLength="33.600" lengthAdjust="spacingAndGlyphs">Debug</text>
<text x="1780" y="407" class="x" textLength="32.400" lengthAdjust="spacingAndGlyphs">net9.0</text>
<text x="1764.600" y="439" class="x" textLength="16.400" lengthAdjust="spacingAndGlyphs">obj</text>
<text x="1756.400" y="471" class="x" textLength="50" lengthAdjust="spacingAndGlyphs">静的クラス</text>
<text x="1748" y="503" class="x" textLength="51" lengthAdjust="spacingAndGlyphs">CS12テスト</text>
<text x="1748" y="535" class="x" textLength="33" lengthAdjust="spacingAndGlyphs">IL検証</text>

<!-- files -->
<path d="M2034 139h8l4 4v13h-12zM2042 139v4h4" fill="#fff" stroke="#666"/>
<path d="M2034 167h8l4 4v13h-12zM2042 167v4h4" fill="#fff" stroke="#666"/><path d="M2038 172h3v3h-3zM2040 176h3v3h-3" fill="#999" stroke="#777" stroke-width=".7"/>
<rect x="2032.500" y="197" width="14" height="12" fill="#f4f4f4" stroke="#555"/><rect x="2035.500" y="199" width="9" height="8" fill="#1c79c8"/>
<path d="M2036 224h7l3 3v11h-10zM2039 229h4M2039 232h4M2039 235h4" fill="#fff" stroke="#444"/><circle cx="2034.500" cy="235" r="3" fill="#333"/>
<path d="M2034 251h8l4 4v13h-12zM2042 251v4h4" fill="#fff" stroke="#666"/>
<text x="2052.400" y="147" class="x" textLength="183" lengthAdjust="spacingAndGlyphs">SimpleGenerateAssembly.deps.json</text>
<text x="2052.400" y="175" class="x" textLength="146" lengthAdjust="spacingAndGlyphs">SimpleGenerateAssembly.dll</text>
<text x="2052.400" y="203" class="x" textLength="151.700" lengthAdjust="spacingAndGlyphs">SimpleGenerateAssembly.exe</text>
<text x="2052.400" y="231" class="x" textLength="154.600" lengthAdjust="spacingAndGlyphs">SimpleGenerateAssembly.pdb</text>
<text x="2052.400" y="259" class="x" textLength="221.900" lengthAdjust="spacingAndGlyphs">SimpleGenerateAssembly.runtimeconfig.j...</text>
<text x="2293" y="147" class="x" style="fill:#555">20</text>
<text x="2293" y="175" class="x" style="fill:#555">20</text>
<text x="2293" y="203" class="x" style="fill:#555">20</text>
<text x="2293" y="231" class="x" style="fill:#555">20</text>
<text x="2293" y="259" class="x" style="fill:#555">20</text>

<rect x="1663.500" y="0" width="32" height="535" fill="url(#sh)"/>
</svg>
</body></html>
